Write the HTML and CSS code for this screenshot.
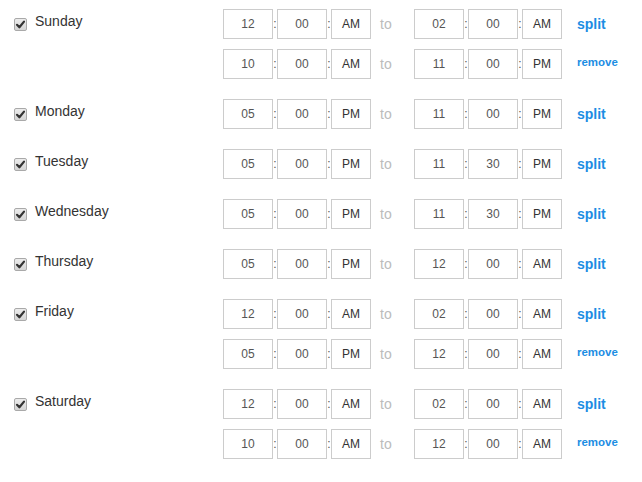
FILE: index.html
```html
<!DOCTYPE html>
<html>
<head>
<meta charset="utf-8">
<link rel="stylesheet" href="styles.css">
</head>
<body>
<div class="schedule">

  <div class="day">
    <div class="day-label"><span class="cb"><svg viewBox="0 0 13 13" width="13" height="13"><path d="M3 6.8 L5.4 9.3 L10 3.6" fill="none" stroke="#333" stroke-width="2.2" stroke-linecap="round" stroke-linejoin="round"/></svg></span><span class="name">Sunday</span></div>
    <div class="slots">
      <div class="slot"><span class="box">12</span><span class="colon">:</span><span class="box">00</span><span class="colon">:</span><span class="box ap">AM</span><span class="to">to</span><span class="box">02</span><span class="colon">:</span><span class="box">00</span><span class="colon">:</span><span class="box ap">AM</span><a class="split">split</a></div>
      <div class="slot"><span class="box">10</span><span class="colon">:</span><span class="box">00</span><span class="colon">:</span><span class="box ap">AM</span><span class="to">to</span><span class="box">11</span><span class="colon">:</span><span class="box">00</span><span class="colon">:</span><span class="box ap">PM</span><a class="remove">remove</a></div>
    </div>
  </div>

  <div class="day">
    <div class="day-label"><span class="cb"><svg viewBox="0 0 13 13" width="13" height="13"><path d="M3 6.8 L5.4 9.3 L10 3.6" fill="none" stroke="#333" stroke-width="2.2" stroke-linecap="round" stroke-linejoin="round"/></svg></span><span class="name">Monday</span></div>
    <div class="slots">
      <div class="slot"><span class="box">05</span><span class="colon">:</span><span class="box">00</span><span class="colon">:</span><span class="box ap">PM</span><span class="to">to</span><span class="box">11</span><span class="colon">:</span><span class="box">00</span><span class="colon">:</span><span class="box ap">PM</span><a class="split">split</a></div>
    </div>
  </div>

  <div class="day">
    <div class="day-label"><span class="cb"><svg viewBox="0 0 13 13" width="13" height="13"><path d="M3 6.8 L5.4 9.3 L10 3.6" fill="none" stroke="#333" stroke-width="2.2" stroke-linecap="round" stroke-linejoin="round"/></svg></span><span class="name">Tuesday</span></div>
    <div class="slots">
      <div class="slot"><span class="box">05</span><span class="colon">:</span><span class="box">00</span><span class="colon">:</span><span class="box ap">PM</span><span class="to">to</span><span class="box">11</span><span class="colon">:</span><span class="box">30</span><span class="colon">:</span><span class="box ap">PM</span><a class="split">split</a></div>
    </div>
  </div>

  <div class="day">
    <div class="day-label"><span class="cb"><svg viewBox="0 0 13 13" width="13" height="13"><path d="M3 6.8 L5.4 9.3 L10 3.6" fill="none" stroke="#333" stroke-width="2.2" stroke-linecap="round" stroke-linejoin="round"/></svg></span><span class="name">Wednesday</span></div>
    <div class="slots">
      <div class="slot"><span class="box">05</span><span class="colon">:</span><span class="box">00</span><span class="colon">:</span><span class="box ap">PM</span><span class="to">to</span><span class="box">11</span><span class="colon">:</span><span class="box">30</span><span class="colon">:</span><span class="box ap">PM</span><a class="split">split</a></div>
    </div>
  </div>

  <div class="day">
    <div class="day-label"><span class="cb"><svg viewBox="0 0 13 13" width="13" height="13"><path d="M3 6.8 L5.4 9.3 L10 3.6" fill="none" stroke="#333" stroke-width="2.2" stroke-linecap="round" stroke-linejoin="round"/></svg></span><span class="name">Thursday</span></div>
    <div class="slots">
      <div class="slot"><span class="box">05</span><span class="colon">:</span><span class="box">00</span><span class="colon">:</span><span class="box ap">PM</span><span class="to">to</span><span class="box">12</span><span class="colon">:</span><span class="box">00</span><span class="colon">:</span><span class="box ap">AM</span><a class="split">split</a></div>
    </div>
  </div>

  <div class="day">
    <div class="day-label"><span class="cb"><svg viewBox="0 0 13 13" width="13" height="13"><path d="M3 6.8 L5.4 9.3 L10 3.6" fill="none" stroke="#333" stroke-width="2.2" stroke-linecap="round" stroke-linejoin="round"/></svg></span><span class="name">Friday</span></div>
    <div class="slots">
      <div class="slot"><span class="box">12</span><span class="colon">:</span><span class="box">00</span><span class="colon">:</span><span class="box ap">AM</span><span class="to">to</span><span class="box">02</span><span class="colon">:</span><span class="box">00</span><span class="colon">:</span><span class="box ap">AM</span><a class="split">split</a></div>
      <div class="slot"><span class="box">05</span><span class="colon">:</span><span class="box">00</span><span class="colon">:</span><span class="box ap">PM</span><span class="to">to</span><span class="box">12</span><span class="colon">:</span><span class="box">00</span><span class="colon">:</span><span class="box ap">AM</span><a class="remove">remove</a></div>
    </div>
  </div>

  <div class="day">
    <div class="day-label"><span class="cb"><svg viewBox="0 0 13 13" width="13" height="13"><path d="M3 6.8 L5.4 9.3 L10 3.6" fill="none" stroke="#333" stroke-width="2.2" stroke-linecap="round" stroke-linejoin="round"/></svg></span><span class="name">Saturday</span></div>
    <div class="slots">
      <div class="slot"><span class="box">12</span><span class="colon">:</span><span class="box">00</span><span class="colon">:</span><span class="box ap">AM</span><span class="to">to</span><span class="box">02</span><span class="colon">:</span><span class="box">00</span><span class="colon">:</span><span class="box ap">AM</span><a class="split">split</a></div>
      <div class="slot"><span class="box">10</span><span class="colon">:</span><span class="box">00</span><span class="colon">:</span><span class="box ap">AM</span><span class="to">to</span><span class="box">12</span><span class="colon">:</span><span class="box">00</span><span class="colon">:</span><span class="box ap">AM</span><a class="remove">remove</a></div>
    </div>
  </div>

</div>
</body>
</html>
```

FILE: styles.css
```css
html, body {
  margin: 0;
  padding: 0;
  background: #fff;
}

body {
  font-family: "Liberation Sans", Arial, sans-serif;
  color: #333;
}

.schedule {
  padding: 9px 0 0 14px;
}

.day {
  display: flex;
  align-items: flex-start;
  margin-bottom: 20px;
}

.day-label {
  width: 209px;
  flex: none;
  display: flex;
  align-items: flex-start;
  padding-top: 2px;
  font-size: 14px;
  line-height: 20px;
}

.cb {
  width: 13px;
  height: 13px;
  margin-top: 7px;
  margin-right: 8px;
  box-sizing: border-box;
  border: 1px solid #a9a9a9;
  border-radius: 2px;
  background: linear-gradient(#ececec, #d4d4d4);
  display: flex;
  align-items: center;
  justify-content: center;
  overflow: hidden;
}

.cb svg {
  display: block;
  flex: none;
}

.name {
  color: #333;
}

.slots {
  display: flex;
  flex-direction: column;
  gap: 10px;
}

.slot {
  display: flex;
  align-items: center;
  height: 30px;
}

.box {
  box-sizing: border-box;
  width: 50px;
  height: 30px;
  border: 1px solid #ccc;
  display: flex;
  align-items: center;
  justify-content: center;
  font-size: 12px;
  color: #555;
}

.box.ap {
  width: 40px;
  color: #333;
}

.colon {
  width: 4px;
  text-align: center;
  font-size: 12px;
  color: #555;
  line-height: 30px;
}

.to {
  width: 43px;
  box-sizing: border-box;
  padding-left: 9px;
  font-size: 14px;
  color: #bbb;
}

.split,
.remove {
  margin-left: 15px;
  font-weight: bold;
  color: #1c8de3;
  cursor: pointer;
}

.split {
  font-size: 14px;
}

.remove {
  font-size: 11.5px;
  margin-bottom: 5px;
}
```
